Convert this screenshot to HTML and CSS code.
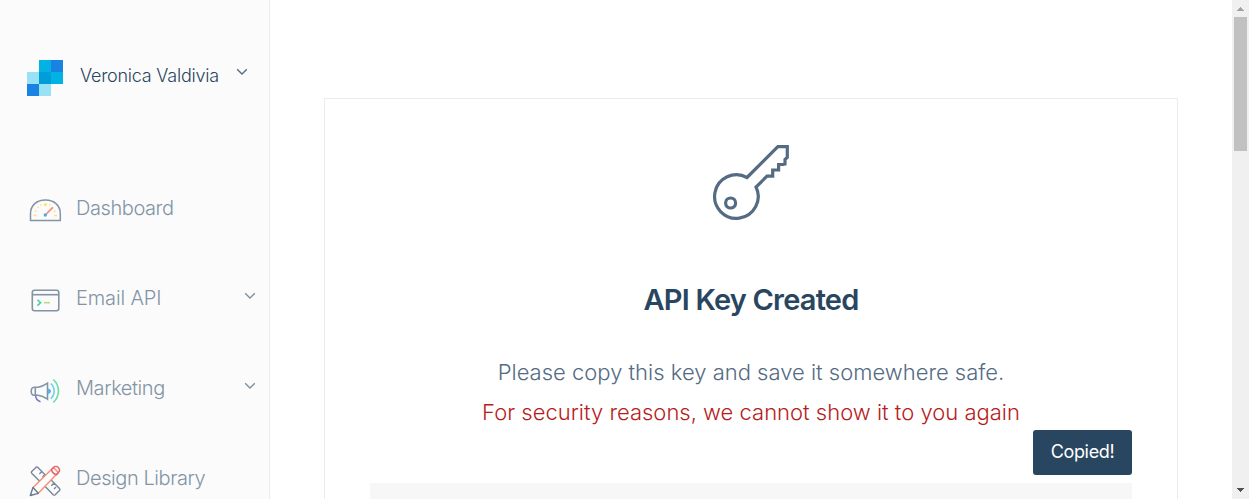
FILE: index.html
```html
<!DOCTYPE html>
<html lang="en">
<head>
<meta charset="utf-8">
<title>API Keys</title>
<link rel="stylesheet" href="styles.css">
</head>
<body>
<div class="app">
  <aside class="sidebar">
    <div class="account">
      <svg class="logo" viewBox="0 0 36 36" shape-rendering="crispEdges">
        <path fill="#00b3e3" d="M12 0h12v12H12zM24 12h12v12H24z"/>
        <path fill="#1a82e2" d="M24 0h12v12H24zM0 24h12v12H0z"/>
        <path fill="#99e1f4" d="M0 12h12v12H0zM12 24h12v12H12z"/>
        <path fill="#009dd9" d="M12 12h12v12H12z"/>
      </svg>
      <span class="account-name">Veronica Valdivia</span>
      <svg class="chevron" viewBox="0 0 12 8"><path d="M1.200 1.200 6 6l4.800-4.800"/></svg>
    </div>
    <nav class="menu">
      <a class="item">
        <svg class="icon" viewBox="0 0 34 34" fill="none">
          <path d="M2.500 26.600V19.500C2.500 11 9 6 17.400 6s14.900 5 14.900 13.500v7.100z" stroke="#8294a6" stroke-width="1.500"/>
          <path d="M5.500 21.500h3M26 21.500h3M7 17l1.500.7M27.500 17l-1.500.7M9.500 13l1.200 1M25 13l-1.200 1M12.500 10.300l.8 1.200M22.200 10.300l-.8 1.200" stroke="#fbe27c" stroke-width="1.400"/>
          <circle cx="17.300" cy="10.700" r="1.600" fill="#fbe27c"/>
          <path d="m18.300 20 6.500-6.700" stroke="#f98c74" stroke-width="1.700"/>
          <circle cx="17.300" cy="21" r="1.700" fill="#51a9e3"/>
        </svg>
        <span class="label">Dashboard</span>
      </a>
      <a class="item">
        <svg class="icon" viewBox="0 0 34 34" fill="none" stroke-width="1.600">
          <rect x="4.300" y="6.300" width="26.500" height="20.500" rx="2.200" stroke="#8294a6"/>
          <path d="M4.300 10.700h26.500" stroke="#8294a6"/>
          <path d="m9.500 15.800 3.100 2.900-3.100 2.900" stroke="#43d69c"/>
          <path d="M16 18.700h6" stroke="#b5dd83"/>
        </svg>
        <span class="label api">Email API</span>
        <svg class="chevron" viewBox="0 0 12 8"><path d="M1.200 1.200 6 6l4.800-4.800"/></svg>
      </a>
      <a class="item">
        <svg class="icon" viewBox="0 0 34 34" fill="none" stroke-width="1.600">
          <path d="M7.500 20.500c0 4 1.500 6.200 5 7.200" stroke="#7b72ce"/>
          <path d="M6 13.200h4c4.500-.5 7-2.200 9.500-4v16c-2.500-1.800-5-3.500-9.500-4H6C2.300 21.200 2.300 13.200 6 13.200z" stroke="#8294a6"/>
          <path d="M7.300 13.200v8" stroke="#8294a6"/>
          <path d="M20.300 15v4.400a2.200 2.200 0 0 0 0-4.400z" fill="#5aaef0" stroke="#5aaef0" stroke-width="1"/>
          <path d="M22.700 9.500c4.600 4 4.600 11.200 0 15.200" stroke="#69d3ed"/>
          <path d="M25.300 5.500c6.800 6 6.800 16.800 0 22.800" stroke="#6bdda2"/>
        </svg>
        <span class="label">Marketing</span>
        <svg class="chevron" viewBox="0 0 12 8"><path d="M1.200 1.200 6 6l4.800-4.800"/></svg>
      </a>
      <a class="item">
        <svg class="icon" viewBox="0 0 34 34" fill="none" stroke-width="1.400" stroke-linejoin="round">
          <path d="M12.500 18 3.700 9.200q-.8-1 0-1.800l4.200-4q1-.8 2 0l8.600 8.800M22.800 15.800l8.700 8.700q.8 1 0 2l-4.300 4.200q-1 .8-2 0L16.700 22M11.300 10l3-2.800M14.500 13l2-2M23.300 21.800l3-3M26 25l2-2" stroke="#74879b"/>
          <path d="m4.500 24 21-20.500 4.800 5L10 29.500z" fill="#fcfcfc" stroke="#f98c74"/>
          <path d="m23.500 5.500 2-2c3-3.300 8 1.600 5 5l-2 2.200c-2.500-.5-4.500-2.500-5-5.200z" stroke="#df646c"/>
          <path d="M5 23.500 2.300 31.500l8-2.200z" fill="#fcfcfc" stroke="#66798e"/>
        </svg>
        <span class="label">Design Library</span>
      </a>
    </nav>
  </aside>
  <main class="content">
    <section class="card">
      <svg class="key" viewBox="0 0 80 80" fill="none" stroke="#546b83" stroke-width="3.200">
        <path d="M36 37.500 66.900 6.600H76.300V17.300L74 19.500V24L72 24.500H67.600V30H61.700V36.200H56L45 47A21.800 21.800 0 1 1 36 37.500z"/>
        <circle cx="19.600" cy="63" r="5"/>
      </svg>
      <h1 class="title">API Key Created</h1>
      <p class="message">Please copy this key and save it somewhere safe.</p>
      <p class="message warning">For security reasons, we cannot show it to you again</p>
      <div class="key-field"><span class="tooltip">Copied!</span></div>
    </section>
  </main>
  <div class="scrollbar">
    <svg class="arrow" viewBox="0 0 7 4" shape-rendering="crispEdges"><path fill="#a3a3a3" d="M3 0h1v1h1v1h1v1h1v1H0V3h1V2h1V1h1z"/></svg>
    <div class="thumb"></div>
    <svg class="arrow down" viewBox="0 0 7 4" shape-rendering="crispEdges"><path fill="#505050" d="M0 0h7v1H6v1H5v1H4v1H3V3H2V2H1V1H0z"/></svg>
  </div>
</div>
</body>
</html>
```
FILE: styles.css
```css
* { box-sizing: border-box; }
body {
  margin: 0;
  height: 499px;
  overflow: hidden;
  background: #fff;
  font-family: Inter, "Liberation Sans", sans-serif;
  font-weight: 300;
}
.app { display: flex; height: 499px; overflow: hidden; }
.sidebar {
  width: 270px;
  flex: none;
  background: #fbfbfb;
  border-right: 1px solid #e9ebed;
  padding-top: 60px;
}
.account { display: flex; height: 36px; padding-left: 27px; }
.logo { width: 36px; height: 36px; margin-right: 17px; }
.account-name {
  width: 156px;
  font-size: 18px;
  letter-spacing: -.24px;
  line-height: 32px;
  white-space: nowrap;
  color: #294661;
}
.chevron {
  width: 12px;
  height: 8px;
  fill: none;
  stroke: #7b8da0;
  stroke-width: 1.300;
}
.account .chevron { margin-top: 8px; stroke: #546b83; }
.menu { padding-top: 67px; }
.item { display: flex; align-items: center; height: 90px; padding-left: 28px; }
.icon { width: 34px; height: 34px; flex: none; margin: 6px 14px 0 0; }
.label {
  width: 168px;
  font-size: 20px;
  letter-spacing: -.42px;
  line-height: 30px;
  white-space: nowrap;
  color: #8294a6;
}
.label.api { letter-spacing: -.15px; }
.item .chevron { margin-bottom: 5px; }
.content { flex: 1; padding: 98px 54px 0; }
.card {
  height: 500px;
  border: 1px solid #e9ebed;
  padding: 41px 45px 0;
  display: flex;
  flex-direction: column;
  align-items: center;
}
.key { width: 80px; height: 80px; flex: none; margin-bottom: 59px; }
.title {
  margin: 0 0 31px;
  font-size: 29px;
  letter-spacing: -.8px;
  line-height: 42px;
  font-weight: 600;
  white-space: nowrap;
  color: #294661;
}
.message {
  margin: 0;
  font-size: 22px;
  line-height: 40px;
  white-space: nowrap;
  color: #546b83;
}
.warning { color: #b71c1c; }
.key-field {
  position: relative;
  width: 100%;
  height: 60px;
  flex: none;
  margin-top: 51px;
  background: #f7f7f7;
}
.tooltip {
  position: absolute;
  right: 0;
  bottom: 68px;
  width: 99px;
  height: 45px;
  border-radius: 3px;
  background: #294661;
  color: #fff;
  font-size: 18px;
  letter-spacing: -.35px;
  font-weight: 400;
  line-height: 44px;
  text-align: center;
}
.scrollbar {
  width: 17px;
  flex: none;
  background: #f0f0f0;
  display: flex;
  flex-direction: column;
  align-items: center;
}
.arrow { width: 7px; height: 4px; margin: 7px 0 6px; flex: none; }
.thumb { width: 13px; height: 134px; background: #c1c1c1; }
.down { margin: auto 0 7px; }
```
